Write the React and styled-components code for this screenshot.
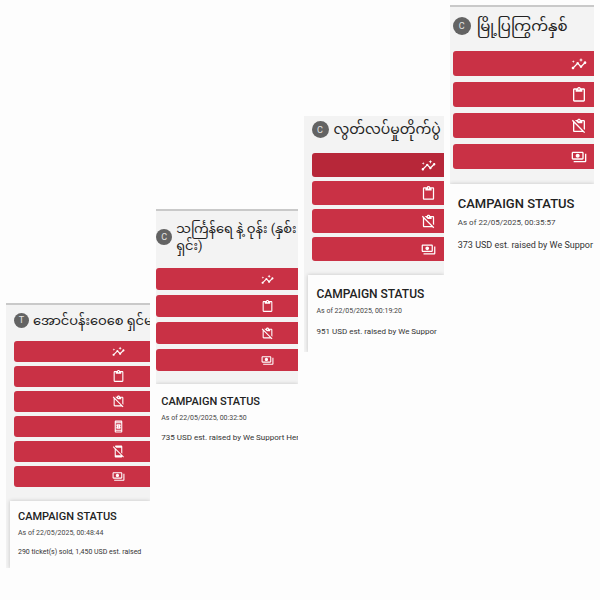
import React from "react";
import styled, { createGlobalStyle } from "styled-components";
import {
  MdInsights,
  MdOutlineContentPaste,
  MdContentPasteOff,
  MdOutlineBookOnline,
  MdMobileOff,
  MdOutlinePayments,
} from "react-icons/md";

const GlobalStyle = createGlobalStyle`
  * { box-sizing: border-box; }
  body {
    margin: 0;
    background: #fdfdfd;
    color: #222;
    font-family: Roboto, "Noto Sans Myanmar", "Noto Sans", sans-serif;
  }
`;

const Board = styled.main`
  display: grid;
  grid-template-columns: 144fr 141fr 140fr 144fr;
  column-gap: 6px;
  align-items: start;
  padding: 5px 6px 0;
`;

const Panel = styled.section`
  min-width: 0;
  margin-top: ${(p) => p.$drop}px;
  overflow: hidden;
  background: #f3f3f3;
  border-top: ${(p) => (p.$ruled ? "2px solid #c9c9c9" : "0")};
`;

const Header = styled.header`
  display: flex;
  align-items: center;
  gap: ${(p) => p.$gap}px;
  height: ${(p) => p.$height}px;
  padding-bottom: ${(p) => p.$below}px;
  padding-left: ${(p) => p.$inset}px;
`;

const Avatar = styled.span`
  display: flex;
  flex: none;
  align-items: center;
  justify-content: center;
  width: ${(p) => p.$size}px;
  height: ${(p) => p.$size}px;
  border-radius: 50%;
  background: #636363;
  color: #e4e4e4;
  font-size: 9px;
`;

const Name = styled.h1`
  flex: none;
  margin: 0;
  font-size: ${(p) => p.$size}px;
  line-height: 17px;
  font-weight: 400;
  white-space: nowrap;
`;

const Line = styled.span`
  display: block;
`;

const Actions = styled.nav`
  display: flex;
  flex-direction: column;
  gap: ${(p) => p.$gap}px;
  padding-left: ${(p) => p.$inset}px;
`;

const Action = styled.button`
  display: flex;
  align-items: center;
  justify-content: flex-end;
  height: ${(p) => p.$height}px;
  padding: 0 ${(p) => p.$end}px 0 0;
  border: 0;
  border-radius: 3px 0 0 3px;
  background: ${(p) => (p.$pressed ? "#b72739" : "#c93145")};
  color: #fff;
  font-size: ${(p) => p.$icon}px;
  cursor: pointer;
`;

const Status = styled.article`
  height: ${(p) => p.$height}px;
  margin-top: ${(p) => p.$top}px;
  margin-left: ${(p) => p.$edge}px;
  padding: ${(p) => p.$pad}px 0 0 ${(p) => p.$inset}px;
  background: #fdfdfd;
  box-shadow: 0 0 4px rgba(0, 0, 0, 0.2);
  white-space: nowrap;
`;

const Heading = styled.h2`
  margin: 0;
  font-size: ${(p) => p.$size}px;
  line-height: 16px;
  font-weight: 500;
`;

const Stamp = styled.p`
  margin: ${(p) => p.$gap}px 0 0;
  color: #444;
  font-size: ${(p) => p.$size}px;
  line-height: 12px;
`;

const Raised = styled.p`
  margin: ${(p) => p.$gap}px 0 0;
  color: #333;
  font-size: ${(p) => p.$size}px;
  line-height: 12px;
`;

const insights = { label: "Insights", Icon: MdInsights };
const paste = { label: "Open form", Icon: MdOutlineContentPaste };
const pasteOff = { label: "Close form", Icon: MdContentPasteOff };
const booking = { label: "Online booking", Icon: MdOutlineBookOnline };
const mobileOff = { label: "Disable booking", Icon: MdMobileOff };
const payments = { label: "Payments", Icon: MdOutlinePayments };

const campaigns = [
  {
    id: "t1",
    letter: "T",
    lines: ["အောင်ပန်းဝေစေ ရှင်မ"],
    drop: 298,
    ruled: true,
    header: { height: 36, below: 6, inset: 8, gap: 4, avatar: 15, name: 13 },
    actions: { inset: 8, gap: 4, height: 21, end: 25, icon: 13 },
    items: [insights, paste, pasteOff, booking, mobileOff, payments],
    card: { top: 14, edge: 4, inset: 8, pad: 8, height: 67 },
    text: { heading: 11, stamp: 7, stampGap: 2, raised: 7, raisedGap: 7 },
    stamp: "As of 22/05/2025, 00:48:44",
    raised: "290 ticket(s) sold, 1,450 USD est. raised",
  },
  {
    id: "c2",
    letter: "C",
    lines: ["သင်္ကြန်ရေ နဲ့ ဝုန်း (နှစ်း", "ရှင်း)"],
    drop: 204,
    ruled: true,
    header: { height: 57, below: 5, inset: 0, gap: 4, avatar: 16, name: 13 },
    actions: { inset: 0, gap: 5, height: 22, end: 24, icon: 13 },
    items: [insights, paste, pasteOff, payments],
    card: { top: 13, edge: 0, inset: 5, pad: 10, height: 70 },
    text: { heading: 11, stamp: 7, stampGap: 2, raised: 8, raisedGap: 8 },
    stamp: "As of 22/05/2025, 00:32:50",
    raised: "735 USD est. raised by We Support Her",
  },
  {
    id: "c3",
    letter: "C",
    lines: ["လွတ်လပ်မှုတိုက်ပွဲ"],
    drop: 111,
    ruled: false,
    header: { height: 37, below: 10, inset: 8, gap: 5, avatar: 17, name: 14 },
    actions: { inset: 8, gap: 4, height: 24, end: 8, icon: 15 },
    items: [{ ...insights, pressed: true }, paste, pasteOff, payments],
    card: { top: 14, edge: 4, inset: 9, pad: 11, height: 77 },
    text: { heading: 12, stamp: 7, stampGap: 3, raised: 8, raisedGap: 9 },
    stamp: "As of 22/05/2025, 00:19:20",
    raised: "951 USD est. raised by We Suppor",
  },
  {
    id: "c4",
    letter: "C",
    lines: ["မြို့ပြကြွက်နှစ်"],
    drop: 0,
    ruled: true,
    header: { height: 44, below: 6, inset: 3, gap: 6, avatar: 18, name: 15 },
    actions: { inset: 3, gap: 6, height: 25, end: 7, icon: 16 },
    items: [insights, paste, pasteOff, payments],
    card: { top: 15, edge: 0, inset: 8, pad: 12, height: 80 },
    text: { heading: 13, stamp: 8, stampGap: 5, raised: 9, raisedGap: 10 },
    stamp: "As of 22/05/2025, 00:35:57",
    raised: "373 USD est. raised by We Suppor",
  },
];

function Campaign({ data }) {
  const { header, actions, card, text } = data;
  return (
    <Panel $drop={data.drop} $ruled={data.ruled}>
      <Header
        $height={header.height}
        $below={header.below}
        $inset={header.inset}
        $gap={header.gap}
      >
        <Avatar $size={header.avatar}>{data.letter}</Avatar>
        <Name lang="my" $size={header.name}>
          {data.lines.map((line) => (
            <Line key={line}>{line}</Line>
          ))}
        </Name>
      </Header>
      <Actions $inset={actions.inset} $gap={actions.gap} aria-label="Campaign actions">
        {data.items.map(({ label, Icon, pressed }) => (
          <Action
            key={label}
            type="button"
            aria-label={label}
            $height={actions.height}
            $end={actions.end}
            $icon={actions.icon}
            $pressed={pressed}
          >
            <Icon aria-hidden="true" />
          </Action>
        ))}
      </Actions>
      <Status
        $top={card.top}
        $edge={card.edge}
        $inset={card.inset}
        $pad={card.pad}
        $height={card.height}
      >
        <Heading $size={text.heading}>CAMPAIGN STATUS</Heading>
        <Stamp $size={text.stamp} $gap={text.stampGap}>{data.stamp}</Stamp>
        <Raised $size={text.raised} $gap={text.raisedGap}>{data.raised}</Raised>
      </Status>
    </Panel>
  );
}

export default function App() {
  return (
    <>
      <GlobalStyle />
      <Board>
        {campaigns.map((campaign) => (
          <Campaign key={campaign.id} data={campaign} />
        ))}
      </Board>
    </>
  );
}
